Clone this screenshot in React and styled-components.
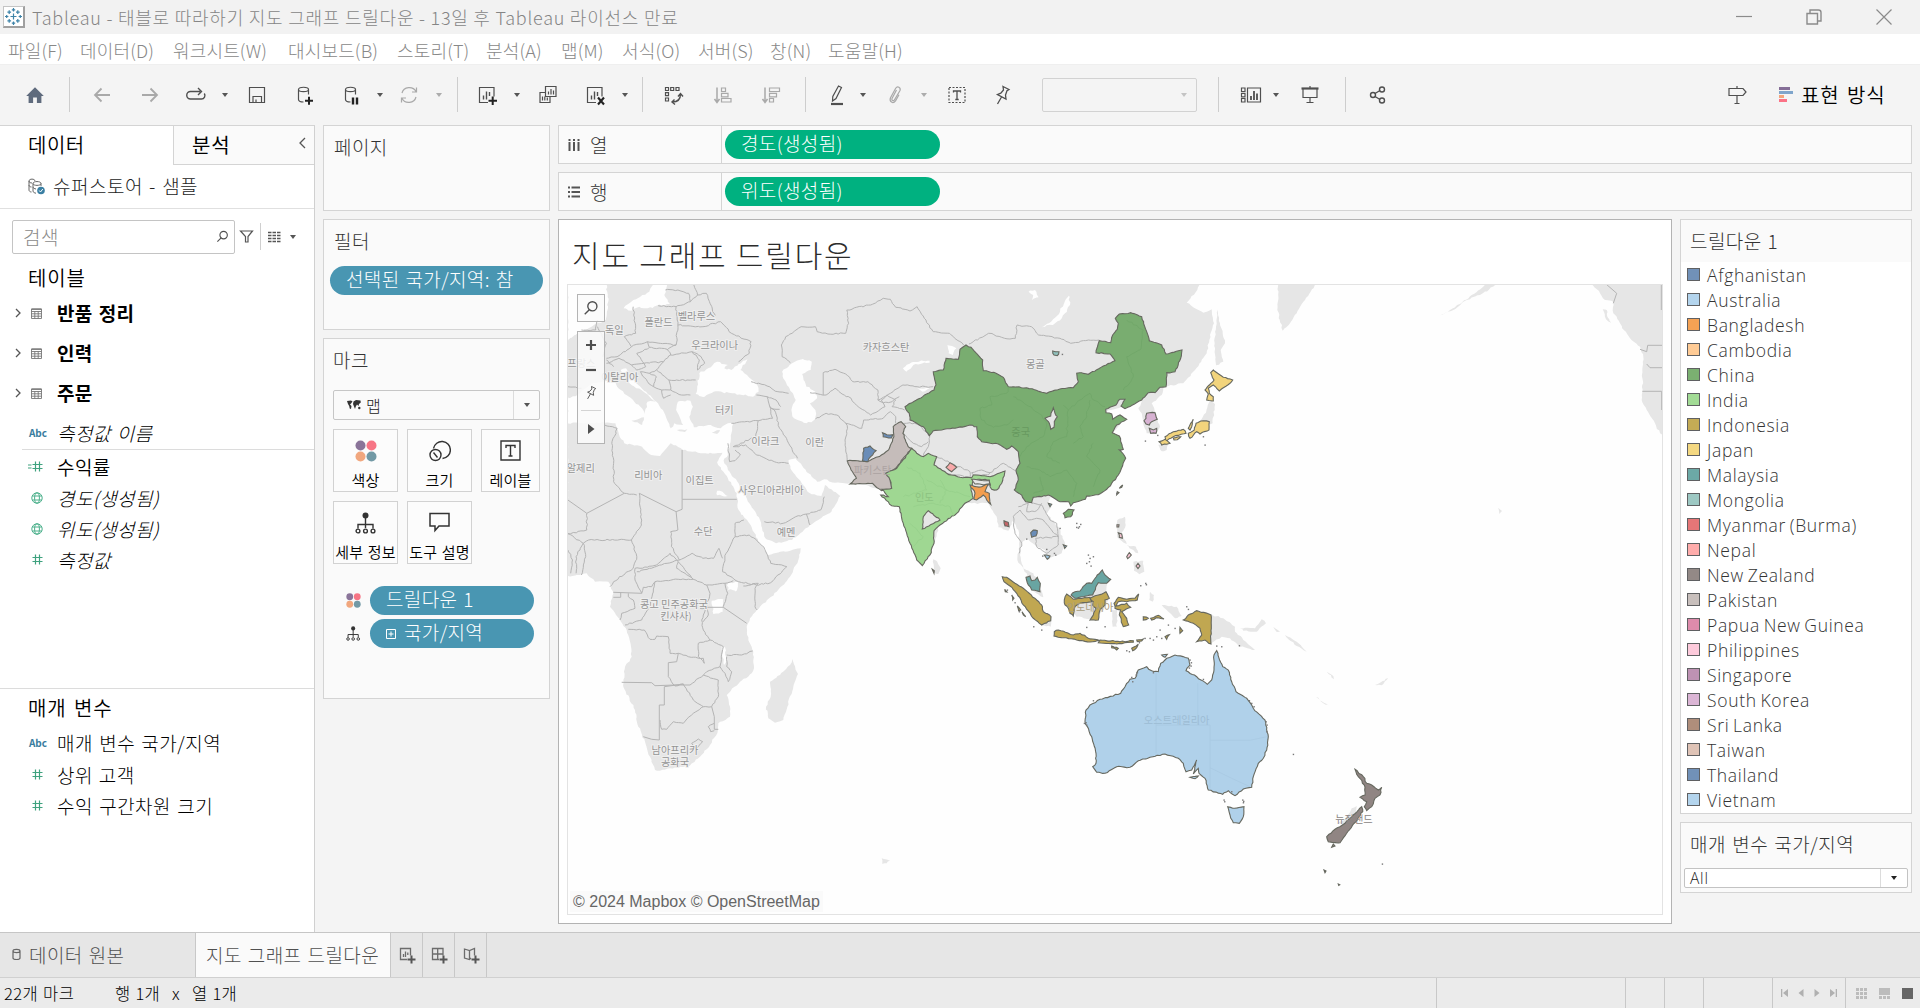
import React from "react";
import styled, { createGlobalStyle, css } from "styled-components";

const UI = `"Noto Sans CJK KR", "Noto Sans", sans-serif`;

const Global = createGlobalStyle`
  * { box-sizing: border-box; }
  html, body { margin: 0; padding: 0; }
  body { width: 1920px; height: 1008px; overflow: hidden; background: #f4f4f4; font-family: ${UI}; }
`;

/* ---------- text ---------- */

const Text = styled.span`
  display: block;
  white-space: pre;
  font-family: ${(p) => p.$family || UI};
  font-size: ${(p) => p.$size || 19}px;
  line-height: ${(p) => p.$lh || 28}px;
  font-weight: ${(p) => p.$weight || 300};
  font-style: ${(p) => (p.$italic ? "italic" : "normal")};
  letter-spacing: ${(p) => (p.$ls === undefined ? 0.4 : p.$ls)}px;
  word-spacing: ${(p) => (p.$ws === undefined ? 1.5 : p.$ws)}px;
  color: ${(p) => p.$color || "#000"};
`;

/* ---------- frame ---------- */

const Window = styled.div`
  width: 1920px;
  height: 1008px;
  display: flex;
  flex-direction: column;
  background: #f4f4f4;
`;

const TitleBar = styled.header`
  height: 34px;
  flex: none;
  display: flex;
  align-items: center;
  background: #f2f2f2;
  padding: 0 28px 0 3px;
`;
const AppIcon = styled.div`
  width: 22px;
  height: 22px;
  border: 1px solid #c4c4c4;
  border-right: 2px solid #a0a0a0;
  border-bottom: 2px solid #a0a0a0;
  background: #fff;
  display: flex;
  margin-right: 7px;
`;
const WindowButtons = styled.div`
  margin-left: auto;
  display: flex;
  gap: 54px;
  align-items: center;
`;

const MenuBar = styled.nav`
  height: 30px;
  flex: none;
  display: flex;
  align-items: center;
  background: #fff;
  padding: 2px 0 0 8px;
`;
const MenuItem = styled.div`
  width: ${(p) => p.$w}px;
`;

const Toolbar = styled.div`
  height: 61px;
  flex: none;
  display: flex;
  align-items: center;
  border-top: 1px solid #efefef;
  background: #f4f4f4;
  padding-bottom: 1px;
`;
const Tool = styled.div`
  width: ${(p) => p.$w || 24}px;
  height: 24px;
  margin-left: ${(p) => p.$ml || 0}px;
  display: flex;
  align-items: center;
  justify-content: center;
  opacity: ${(p) => (p.$off ? 0.45 : 1)};
`;
const Rule = styled.div`
  width: 1px;
  height: 35px;
  margin-left: ${(p) => p.$ml}px;
  background: #cdcdcd;
`;
const ToolSelect = styled.div`
  width: 155px;
  height: 34px;
  margin-left: ${(p) => p.$ml}px;
  border: 1px solid #d2d2d2;
  border-radius: 2px;
  display: flex;
  align-items: center;
  justify-content: flex-end;
  padding-right: 9px;
`;
const Caret = styled.i`
  display: block;
  border: solid transparent;
  border-width: ${(p) => p.$s || 3}px ${(p) => p.$s || 3}px 0;
  border-top: ${(p) => (p.$s || 3) + 1}px solid ${(p) => p.$c || "#555"};
`;
const ShowMe = styled.div`
  display: flex;
  align-items: center;
  margin-left: ${(p) => p.$ml}px;
  gap: 8px;
`;
const Bars = styled.div`
  width: 14px;
  display: flex;
  flex-direction: column;
  gap: 1px;
`;
const Bar = styled.i`
  display: block;
  height: 3px;
  width: ${(p) => p.$w}px;
  background: ${(p) => p.$c};
`;

const Body = styled.main`
  height: 807px;
  flex: none;
  display: flex;
`;

/* ---------- data pane ---------- */

const DataPane = styled.aside`
  width: 315px;
  flex: none;
  border-top: 1px solid #d4d4d4;
  border-right: 1px solid #d0d0d0;
  background: #fff;
  display: flex;
  flex-direction: column;
`;
const PaneTabs = styled.div`
  height: 39px;
  display: flex;
`;
const DataTab = styled.div`
  width: 173px;
  padding: 5px 0 0 28px;
`;
const AnalyticsTab = styled.div`
  flex: 1;
  border-left: 1px solid #d4d4d4;
  border-bottom: 1px solid #d4d4d4;
  background: #fafafa;
  padding: 5px 8px 0 18px;
  display: flex;
  justify-content: space-between;
`;
const SourceRow = styled.div`
  height: 44px;
  border-bottom: 1px solid #e0e0e0;
  display: flex;
  align-items: center;
  padding: 0 0 1px 28px;
  gap: 8px;
`;
const SearchRow = styled.div`
  height: 57px;
  display: flex;
  align-items: center;
  padding: 0 0 2px 12px;
`;
const SearchBox = styled.div`
  width: 223px;
  height: 34px;
  border: 1px solid #c4c4c4;
  border-radius: 2px;
  display: flex;
  align-items: center;
  justify-content: space-between;
  padding: 0 5px 0 10px;
  margin-right: 4px;
`;
const Vert = styled.i`
  width: 1px;
  height: 27px;
  background: #cfcfcf;
  margin: 0 7px 0 6px;
`;
const SectionTitle = styled.div`
  height: ${(p) => p.$h}px;
  padding-left: 28px;
  display: flex;
  align-items: center;
`;
const TableRow = styled.div`
  height: 40px;
  display: flex;
  align-items: center;
  padding-left: 15px;
`;
const TableGlyphs = styled.div`
  width: 42px;
  display: flex;
  align-items: center;
  gap: 9px;
`;
const FieldRow = styled.div`
  height: ${(p) => p.$h || 31}px;
  display: flex;
  align-items: center;
  padding: ${(p) => p.$pt || 0}px 0 0 22px;
`;
const FieldIcon = styled.div`
  width: 35px;
  flex: none;
  display: flex;
  padding-left: ${(p) => p.$pl || 0}px;
`;
const Divider = styled.div`
  height: 1px;
  background: #dcdcdc;
  margin-left: ${(p) => p.$ml || 0}px;
`;
const Filler = styled.div`
  height: ${(p) => p.$h}px;
`;

/* ---------- shelves ---------- */

const Cards = styled.section`
  width: 227px;
  flex: none;
  margin-left: 8px;
  display: flex;
  flex-direction: column;
  gap: 8px;
`;
const Card = styled.div`
  height: ${(p) => p.$h}px;
  border: 1px solid #d4d4d4;
  background: #fafafa;
  padding: ${(p) => p.$pad || "7px 6px 0"};
`;
const CardTitle = styled.div`
  padding-left: 4px;
`;
const Pill = styled.div`
  width: ${(p) => p.$w}px;
  height: 29px;
  border-radius: 15px;
  background: ${(p) => (p.$green ? "#00b180" : "#4996b2")};
  display: flex;
  align-items: center;
  gap: 8px;
  padding-left: 16px;
  flex: none;
`;
const PillText = styled(Text)`
  padding-bottom: 4px;
  letter-spacing: 0.35px;
`;
const MarkSelect = styled.div`
  height: 30px;
  margin-top: 16px;
  border: 1px solid #c6c6c6;
  border-radius: 2px;
  display: flex;
  align-items: center;
  padding-left: 13px;
  gap: 5px;
`;
const SelectButton = styled.div`
  width: ${(p) => p.$w || 26}px;
  align-self: stretch;
  margin-left: auto;
  border-left: 1px solid #dcdcdc;
  display: flex;
  align-items: center;
  justify-content: center;
`;
const MarkGrid = styled.div`
  display: grid;
  grid-template-columns: 65px 65px 59px;
  grid-auto-rows: 63px;
  gap: 9px;
  margin-top: 9px;
`;
const MarkButton = styled.div`
  border: 1px solid #d2d2d2;
  background: #fcfcfc;
  display: flex;
  flex-direction: column;
  align-items: center;
  padding-top: 10px;
  gap: 8px;
`;
const MarkName = styled(Text)`
  font-size: 15px;
  line-height: 20px;
  letter-spacing: 0.15px;
  word-spacing: 1px;
  font-weight: 350;
`;
const MarkPills = styled.div`
  margin-top: 22px;
  display: flex;
  flex-direction: column;
  gap: 4px;
`;
const MarkPillRow = styled.div`
  display: flex;
  align-items: center;
  padding-left: 13px;
  gap: 9px;
`;

const Workspace = styled.section`
  width: 1354px;
  margin-left: 8px;
  display: flex;
  flex-direction: column;
  gap: 8px;
`;
const Shelf = styled.div`
  height: 39px;
  flex: none;
  border: 1px solid #d4d4d4;
  background: #fafafa;
  display: flex;
`;
const ShelfName = styled.div`
  width: 163px;
  border-right: 1px solid #d4d4d4;
  display: flex;
  align-items: center;
  padding-left: 9px;
  gap: 10px;
`;
const ShelfBody = styled.div`
  padding: 4px 0 0 3px;
`;
const ViewRow = styled.div`
  display: flex;
  gap: 8px;
  align-items: flex-start;
`;
const Sheet = styled.div`
  width: 1114px;
  height: 705px;
  border: 1px solid #b3b3b3;
  background: #fff;
  padding: 0 8px;
`;
const SheetTitle = styled.div`
  height: 64px;
  padding: 12px 0 0 5px;
`;
const MapFrame = styled.div`
  position: relative;
  width: 1096px;
  height: 631px;
  border: 1px solid #e3e3e3;
  svg.map { display: block; }
`;
const floating = css`
  position: absolute;
  left: 9px;
  width: 28px;
  border: 1px solid #b4b4b4;
  background: rgba(250, 250, 250, 0.86);
  display: flex;
  flex-direction: column;
  align-items: center;
`;
const MapSearch = styled.div`
  ${floating}
  top: 9px;
  height: 28px;
  justify-content: center;
`;
const MapTools = styled.div`
  ${floating}
  top: 46px;
  height: 113px;
  padding-top: 6px;
  gap: 9px;
`;
const MapToolsRule = styled.i`
  width: 20px;
  height: 1px;
  background: #d4d4d4;
  margin-bottom: 2px;
`;
const Credits = styled.div`
  position: absolute;
  left: 2px;
  bottom: 2px;
  height: 21px;
  padding: 1px 3px 0;
  background: #fafafa;
`;

const RightCol = styled.aside`
  width: 232px;
  display: flex;
  flex-direction: column;
  gap: 8px;
`;
const Legend = styled.div`
  height: 595px;
  border: 1px solid #d4d4d4;
  background: #fff;
`;
const LegendHead = styled.div`
  height: 42px;
  background: #fafafa;
  padding: 7px 0 0 9px;
`;
const LegendRow = styled.div`
  height: 25px;
  display: flex;
  align-items: center;
  gap: 7px;
  padding-left: 6px;
`;
const LegendName = styled(Text)`
  font-family: "Open Sans", "Noto Sans", sans-serif;
  font-size: 17.5px;
  line-height: 25px;
  letter-spacing: 0.68px;
  word-spacing: -1.5px;
  color: #333;
  padding-top: 2px;
`;
const Swatch = styled.i`
  width: 13px;
  height: 13px;
  border: 1px solid #5f6062;
  background: ${(p) => p.$c};
`;
const Param = styled.div`
  height: 71px;
  border: 1px solid #d4d4d4;
  background: #fafafa;
  padding: 7px 3px 0;
`;
const ParamName = styled.div`
  padding-left: 6px;
`;
const ParamSelect = styled.div`
  height: 20px;
  margin-top: 10px;
  border: 1px solid #c3c3c3;
  border-radius: 2px;
  background: #fff;
  display: flex;
  align-items: center;
  padding-left: 5px;
`;

/* ---------- bottom ---------- */

const SheetTabs = styled.footer`
  height: 45px;
  flex: none;
  border-top: 1px solid #c6c6c6;
  background: #e6e6e6;
  display: flex;
`;
const SheetTab = styled.div`
  width: ${(p) => p.$w}px;
  border-right: 1px solid #c8c8c8;
  background: ${(p) => (p.$active ? "#fafafa" : "#e6e6e6")};
  display: flex;
  align-items: center;
  justify-content: ${(p) => (p.$center ? "center" : "flex-start")};
  padding-left: ${(p) => p.$pl || 0}px;
  padding-bottom: 1px;
  gap: 7px;
`;
const StatusBar = styled.div`
  height: 31px;
  flex: none;
  border-top: 1px solid #d0d0d0;
  background: #ebebeb;
  display: flex;
`;
const StatusText = styled.div`
  width: 1436px;
  display: flex;
  padding: 3px 0 0 4px;
`;
const StatusCell = styled.div`
  width: ${(p) => p.$w}px;
  border-left: 1px solid #c8c8c8;
  display: flex;
  align-items: center;
  gap: ${(p) => p.$gap || 0}px;
  padding-left: ${(p) => p.$pl || 0}px;
`;

/* ---------- icons ---------- */

const Svg = ({ w = 24, h = 24, c = "#4f4f4f", sw = 1.2, children, vb }) => (
  <svg width={w} height={h} viewBox={vb || `0 0 ${w} ${h}`} fill="none" stroke={c} strokeWidth={sw}>
    {children}
  </svg>
);

const TableauMark = () => (
  <Svg w={19} h={19} c="#3d83a8" sw={1.2}>
    <path d="M9.5 6.5v6M6.5 9.5h6M9.5 1v3.5M7.8 2.8h3.4M9.5 14.5V18M7.8 16.2h3.4M1 9.5h3.4M2.7 8v3M14.6 9.5H18M16.3 8v3M5.2 3.3v3.8M3.4 5.2h3.7M13.8 3.3v3.8M12 5.2h3.7M5.2 12v3.8M3.4 13.9h3.7M13.8 12v3.8M12 13.9h3.7" />
  </Svg>
);
const Home = () => (
  <Svg>
    <path d="M3.2 13 12 4.2l8.8 8.8h-2.4v7h-4.5v-5.6h-3.8V20H5.6v-7z" fill="#5f6b7d" stroke="none" />
  </Svg>
);
const Arrow = ({ flip }) => (
  <Svg c="#a9a9a9" sw={1.8}>
    <path d={flip ? "M4 12h15M12.5 5.5 19 12l-6.5 6.5" : "M20 12H5M11.5 5.5 5 12l6.5 6.5"} />
  </Svg>
);
const Redo = () => (
  <Svg sw={1.4}>
    <path d="M16.5 8.5H6.5a3.500 3.500 0 0 0 0 7.500h11a3.500 3.500 0 0 0 2.800-5.500M14 5l3.500 3.500L14 12" />
  </Svg>
);
const Save = () => (
  <Svg>
    <path d="M4.500 4.500h15v15h-15zM8 19.500v-6h8.500v6M11 19.500V16.500" />
  </Svg>
);
const DbBody = () => <path d="M6.500 6.500v10c0 1.400 2 2.500 5 2.500M6.500 6.500c0-3 10-3 10 0 0 2.800-10 2.800-10 0M16.500 6.500v5" />;
const Db = ({ pause }) => (
  <Svg>
    <DbBody />
    {pause ? <path d="M14 14.500v7M18 14.500v7" stroke="#222" strokeWidth="2.400" /> : <path d="M13 17.700h8M17 13.700v8" stroke="#222" strokeWidth="2" />}
  </Svg>
);
const Refresh = () => (
  <Svg c="#4f4f4f">
    <path d="M5 10a7.500 7 0 0 1 14-1.500M19 14a7.500 7 0 0 1-14 1.500M19.500 4.500v4.500h-4.500M4.500 19.500V15H9" />
  </Svg>
);
const NewSheet = ({ x }) => (
  <Svg>
    <path d="M13 19.500H4.500v-15h14.500v9" />
    <path d="M8.500 16.500v-4M11.500 16.500v-8M14.500 13v-4" strokeWidth="1.400" />
    {x ? <path d="m15 14.500 6 7M21 14.500l-6 7" stroke="#222" strokeWidth="2.100" /> : <path d="M13.500 17.700h8.500M17.700 13.500v8.500" stroke="#222" strokeWidth="2" />}
  </Svg>
);
const Duplicate = () => (
  <Svg>
    <path d="M9.500 3.500h10.500v10H9.500zM9.500 9.500H4v10h10v-6" />
    <path d="M12.500 11.500v-3M15 11.500v-5.500M17.500 11.500v-4M6.500 17.500v-4M8.800 17.500v-4M11.300 17.500v-3" />
  </Svg>
);
const Swap = () => (
  <Svg>
    <path d="M3.500 4.500h3v3h-3zM8.700 4.500h3v3h-3zM14 4.500h3v3h-3zM3.500 9.700h3v3h-3zM3.500 15h3v3h-3z" />
    <path d="M18.500 11c0 5-3 8-8 8M16 13.500l2.500-3 2.500 3M12.500 16.500 10 19l3 2.500" strokeWidth="1.400" />
  </Svg>
);
const Sort = ({ desc }) => (
  <Svg>
    <path d="M6 4.500v14.500M3.500 16 6 19.500 8.500 16" strokeWidth="1.500" />
    {desc ? <path d="M10.500 5h10v3.500h-10zM10.500 10.300h7v3.500h-7zM10.500 15.500h4v3.500h-4z" /> : <path d="M10.500 5h4v3.500h-4zM10.500 10.300h6.500v3.500h-6.500zM10.500 15.500h9.500v3.500h-9.500z" />}
  </Svg>
);
const Pen = () => (
  <Svg>
    <path d="M13.500 3 16.500 4.500 11 15.500l-3.500 2.500.3-4.500z" />
    <path d="M6 21h12" strokeWidth="2.200" />
  </Svg>
);
const Clip = () => (
  <Svg>
    <path d="m13.500 7-4.500 8.500c-.8 2 1.500 3 2.500 1.200L17 7.500c1-3-2.500-5-4.300-2.200l-5.200 9.500c-1.500 4 2.500 6.500 5 3l3.500-6" />
  </Svg>
);
const TextBox = () => (
  <Svg>
    <path d="M4 4.500h16v15H4z" strokeDasharray="2 1.500" />
    <path d="M8.500 9.500V8h7v1.500M12 8v8.500M10.300 16.500h3.400" strokeWidth="1.300" />
  </Svg>
);
const Pin = ({ s = 24 }) => (
  <Svg w={s} h={s} vb="0 0 24 24">
    <path d="m12 3.500 6 3-2 1.300-1.500 4.200.5 4-8.500-4.500 3.300-1.300 2.700-3.200zM10.500 14l-4 7" strokeWidth="1.300" />
  </Svg>
);
const Fit = () => (
  <Svg>
    <path d="M2.500 5H6v3.500H2.500zM2.500 10.300H6v3.500H2.500zM2.500 15.500H6V19H2.500zM8.500 5h13v14h-13z" />
    <path d="M12 17v-4M15 17V8M18 17v-6.500" strokeWidth="1.800" />
  </Svg>
);
const Present = () => (
  <Svg>
    <path d="M3.500 5.500h17" strokeWidth="2.200" />
    <path d="M5 6v8.500h14V6M12 14.500v5M8.500 19.500h7M12 3v2" />
  </Svg>
);
const Share = () => (
  <Svg sw={1.4}>
    <circle cx="7" cy="12" r="2.500" />
    <circle cx="16" cy="6.500" r="2.500" />
    <circle cx="16" cy="17.500" r="2.500" />
    <path d="m9 10.500 5-3M9 13.500l5 3" />
  </Svg>
);
const Signpost = () => (
  <Svg>
    <path d="M4 5.500h14l3 3.500-3 3.500H4zM12 3v2.500M12 12.500v8M9.500 20.500h5" />
  </Svg>
);
const Magnifier = ({ s = 14 }) => (
  <Svg w={s} h={s} vb="0 0 14 14">
    <circle cx="8.200" cy="5.500" r="4" />
    <path d="M5.500 8.500 1.500 12.500" />
  </Svg>
);
const Funnel = () => (
  <Svg w={15} h={15} c="#555">
    <path d="M1.500 2h12L9 7.500V13H6.500V7.500z" />
  </Svg>
);
const ListGrid = () => (
  <Svg w={13} h={12} c="#555" sw={1.3}>
    <path d="M0 1.500h3.500M4.500 1.500H8M9 1.500h3.500M0 4.500h3.500M4.500 4.500H8M9 4.500h3.500M0 7.500h3.500M4.500 7.500H8M9 7.500h3.500M0 10.500h3.500M4.500 10.500H8M9 10.500h3.500" />
  </Svg>
);
const TableIcon = () => (
  <Svg w={11} h={11} c="#777" sw={0.9}>
    <path d="M.5 1h10v9.500H.5zM.5 3.500h10M.5 5.800h10M.5 8.200h10M3.800 3.500v7M7.200 3.500v7" />
    <path d="M.5 1.200h10" strokeWidth="1.300" />
  </Svg>
);
const Chevron = ({ left }) => (
  <Svg w={7} h={12} c="#555" sw={1.3}>
    <path d={left ? "M6 1 1 6l5 5" : "M1 2l4 4-4 4"} />
  </Svg>
);
const Hash = ({ eq }) => (
  <Svg w={eq ? 15 : 11} h={11} c="#3fa27f" sw={1.2}>
    <g transform={eq ? "translate(4 0)" : ""}>
      <path d="M3.500.5v10M7.500.5v10M.5 3.500h10M.5 7.500h10" />
    </g>
    {eq && <path d="M0 4h3.500M0 7h3.500" />}
  </Svg>
);
const Globe = () => (
  <Svg w={12} h={12} c="#4bb08b" sw={1}>
    <circle cx="6" cy="6" r="5.200" />
    <ellipse cx="6" cy="6" rx="2.400" ry="5.200" />
    <path d="M1.300 4h9.400M1.300 8h9.400" />
  </Svg>
);
const Source = () => (
  <Svg w={17} h={17} c="#666" sw={1}>
    <path d="M1 3c0-2.500 6-2.500 6 0M1 3v9c0 1 1 2 2.500 2M1 3c0 1.500 1.500 2 3 2M1 7c0 1 1 2 2.500 2M5 5.500c0-2.600 8-2.600 8 0 0 2.500-8 2.500-8 0v7.500c0 1.300 1.500 2 3 2.200M5 9c0 1 1.500 1.800 3 2M13 5.500V8" />
    <circle cx="13" cy="12.500" r="3.800" fill="#3a7fa3" stroke="none" />
    <path d="m11.200 12.500 1.300 1.500 2.300-3" stroke="#fff" />
  </Svg>
);
const Dots = ({ s }) => (
  <svg width={s} height={s} viewBox="0 0 22 22">
    <circle cx="5.500" cy="5.500" r="5" fill="#8a7499" />
    <circle cx="16.500" cy="5.500" r="5" fill="#f77585" />
    <circle cx="5.500" cy="16.500" r="5" fill="#f1a77e" />
    <circle cx="16.500" cy="16.500" r="5" fill="#7299a5" />
  </svg>
);
const SizeIcon = () => (
  <Svg w={22} h={22} c="#333" sw={1.4}>
    <path d="M4.500 8.500A8.500 8.500 0 1 1 13.500 18.500" />
    <circle cx="6.500" cy="15" r="5.500" />
    <path d="m4.500 12.500 4 5" />
  </Svg>
);
const LabelIcon = () => (
  <Svg w={22} h={22} c="#333" sw={1.4}>
    <path d="M1 1h19v19H1zM6 8V5.500h9V8M10.500 5.500v10.500M8.500 16h4" />
  </Svg>
);
const DetailIcon = ({ s = 22 }) => (
  <Svg w={s} h={s} vb="0 0 22 22" c="#333" sw={1.4}>
    <circle cx="10.500" cy="3.500" r="3" fill="#333" stroke="none" />
    <path d="M10.500 4v12M3 16.500v-4h15v4" />
    <circle cx="3" cy="19" r="1.900" />
    <circle cx="10.500" cy="19" r="1.900" />
    <circle cx="18" cy="19" r="1.900" />
  </Svg>
);
const TooltipIcon = () => (
  <Svg w={22} h={22} c="#333" sw={1.5}>
    <path d="M1 1.500h19v12.500h-10l-4 4.500v-4.500H1z" />
  </Svg>
);
const WorldIcon = () => (
  <Svg w={14} h={10} c="none">
    <path fill="#333" d="M0 1l4-.5 1.500 1L4 3.500 3 4.500l1.500 1.500-.5 3-1.300-.500L2.200 6 1 4zM6.500 1.500 9 0l4.500.5.3 2-1.800 1.500L11.500 6 10 4.500 8.800 6.500 8 9 6.800 6 6 4z" />
    <circle cx="12.300" cy="8" r="1.200" fill="#333" />
  </Svg>
);
const PlusBox = () => (
  <Svg w={10} h={10} c="#fff" sw={1}>
    <path d="M.5.5h9v9h-9zM2.500 5h5M5 2.500v5" />
  </Svg>
);
const NewTab = ({ kind }) => (
  <Svg w={18} h={18} c="#6c6c6c" sw={1.3}>
    {kind === "sheet" && <path d="M9 13.500H2.500V2.500h10v7M5.500 11V8M7.500 11V5.500M9.800 9V6.500" />}
    {kind === "dash" && <path d="M9 13.500H2.500V2.500h10.500v7M2.500 8H13M7.700 2.500v11" />}
    {kind === "story" && <path d="M9 12 7.500 13.500l-5-1.500v-9l5 1.500 5-2v7M7.500 4.500v9" />}
    <path d="M9.500 13.500h8M13.500 9.500v8" stroke="#555" strokeWidth="2" />
  </Svg>
);

/* ---------- map geometry ---------- */

const grid = (ox, oy, sx, sy) => (s) =>
  s.trim().split(/\s+/).map((p) => {
    const [x, y] = p.split(",").map(Number);
    return [ox + x / sx, oy + y / sy];
  });
const west = grid(560, 210, 2.8, 3);
const asia = grid(860, 290, 3, 3);
const africa = grid(560, 540, 3, 3);
const oceania = grid(1050, 540, 3, 3);
const america = grid(1400, 210, 3, 3);

const noise = (n) => {
  const v = Math.sin(n * 12.9898) * 43758.5453;
  return v - Math.floor(v) - 0.5;
};

// Turns a list of points into a path, breaking long edges into a ragged natural line.
const trace = (pts, amp = 0.9, closed = true) => {
  const out = [];
  const n = closed ? pts.length : pts.length - 1;
  for (let i = 0; i < n; i++) {
    const a = pts[i];
    const b = pts[(i + 1) % pts.length];
    const d = Math.hypot(b[0] - a[0], b[1] - a[1]);
    const k = amp ? Math.max(1, Math.round(d / 2.6)) : 1;
    out.push(a);
    for (let j = 1; j < k; j++) {
      const t = j / k;
      const seed = a[0] + b[0] * 1.7 + (a[1] + b[1]) * 0.9 + j * 3.1;
      out.push([
        a[0] + (b[0] - a[0]) * t + noise(seed) * amp * 1.8,
        a[1] + (b[1] - a[1]) * t + noise(seed + 7.7) * amp * 1.8,
      ]);
    }
  }
  if (!closed) out.push(pts[pts.length - 1]);
  return "M" + out.map((p) => p[0].toFixed(1) + " " + p[1].toFixed(1)).join("L") + (closed ? "Z" : "");
};

const land = [
  [
    ...west("22,222"),
    ...asia("1020,-18 1012,0 980,38 1030,68 1055,58 1062,100 1048,150 1040,190 1005,240 970,280 925,288 910,295 905,315 875,340 890,375 900,410 890,430 860,430 850,400 845,370 835,355 850,325 830,335 785,350 740,365 758,388 790,390 757,428 790,510 740,598 640,636 570,622 562,640 575,650 560,672 595,710 615,760 605,790 560,810 555,780 530,770 500,745 485,762 480,795 490,835 520,850 540,880 550,922 515,900 500,850 472,810 478,770 475,720 460,690 445,722 415,712 410,680 390,650 385,640 320,640 240,700 210,800 185,820 150,750 120,650 95,642 70,600 0,582"),
    ...west("810,820 770,818 740,808 720,815 690,785 660,745 640,750 645,775 680,825 700,850 732,858 742,825 785,858 760,905 700,945 650,990 605,1000 575,985 560,930 530,880 500,820 470,780 458,752 470,735 480,670 485,640 470,640 450,655 415,645 375,652 362,620 372,590 365,572 330,575 325,600 345,645 320,640 310,655 288,600 270,575 225,530 195,500 185,475 170,480 195,520 240,550 268,575 245,575 238,612 225,590 160,530 150,510 90,520 45,560 30,600 22,610"),
  ],
  [
    ...west("22,640 125,638 155,640 165,672 180,700 230,710 250,732 280,738 310,700 345,720 400,730 455,728 440,757 470,805 495,850 500,900 530,940 560,1000 580,1032"),
    ...africa("625,45 722,25 715,60 690,110 650,155 600,200 570,235 560,260 565,300 580,335 582,385 575,400 540,425 500,465 510,500 510,530 475,550 472,580 450,615 420,650 385,680 330,685 300,692 285,690 270,650 255,605 235,560 225,510 190,440 190,420 195,380 215,350 213,320 200,270 180,240 150,200 160,160 145,125 105,125 80,100 22,108"),
  ],
  africa("697,357 714,402 700,440 670,540 645,548 625,535 618,500 632,470 630,425 660,405 690,375"),
  west("200,632 235,622 230,645"),
  west("327,660 357,658 350,666"),
  west("425,668 448,660 440,672"),
  asia("220,808 232,815 242,835 235,852 222,848"),
  asia("1072,52 1080,100 1095,160 1082,180 1090,215 1068,226 1064,160 1068,110"),
  asia("1255,-18 1252,60 1268,122 1290,100 1310,70 1335,30 1370,-18"),
  asia("1048,335 1065,342 1058,400 1012,425 1020,395 1038,368"),
  asia("895,464 925,462 920,480 905,484"),
  asia("772,690 795,680 797,705 785,735 800,762 772,742 770,715"),
  asia("820,815 850,812 853,845 838,853 822,842"),
  asia("800,765 828,770 835,790 815,778"),
  asia("698,880 742,880 738,905 745,930 728,962 710,990 650,980 620,940 640,920"),
  asia("527,925 550,962 575,980 572,1010 545,1005 560,990"),
  asia("870,905 882,915 878,935 868,930"),
  asia("905,945 950,950 965,978 945,985 925,965"),
  asia("1050,972 1090,985 1125,1010 1125,1025 1150,1050 1185,1080 1140,1070 1110,1045 1085,1040 1050,1062"),
  asia("1140,1015 1185,1015 1205,988 1218,1000 1190,1025 1150,1022"),
  asia("755,960 772,960 770,1010 758,1010"),
  oceania("670,260 690,275 680,276"),
  oceania("705,285 740,305 770,335 740,318"),
  oceania("798,470 838,498 820,490"),
  oceania("975,435 990,428 1015,415 995,436"),
  oceania("830,395 850,408 852,418"),
  oceania("905,805 920,798 918,830 885,855 862,850 885,838"),
  africa("965,955 990,962 980,970 967,972"),
  america("575,222 600,250 615,270 640,275 640,310 660,340 690,385 720,410 730,440 727,480 728,540 725,570 740,600 765,640 780,670 789,675 789,222"),
  america("608,298 620,300 622,320 634,338 618,328"),
  america("120,316 150,300 180,282 215,255 262,222 292,222 240,255 200,270 160,300"),
  america("295,893 306,903 298,912"),
];

const water = [
  west("380,552 390,490 415,475 440,455 470,465 460,475 480,480 500,462 525,448 505,480 550,520 556,545 540,560 490,550 430,545 405,560"),
  west("622,485 650,460 680,447 705,455 702,480 678,492 690,530 715,545 720,565 700,580 715,600 715,628 690,640 655,625 648,600 660,570 640,530 625,505"),
  west("178,295 205,270 250,245 262,222 300,222 292,255 308,282 270,287 245,295 222,290 200,302"),
  west("22,222 130,222 135,275 128,330 95,345 80,355 50,370 22,390 22,300"),
  west("22,565 48,555 40,600 30,640 22,640"),
  west("1425,257 1428,285 1405,325 1380,345 1348,352 1375,335 1400,305 1415,270"),
  west("960,475 985,457 1035,452 1035,458 990,464 970,485"),
  west("1085,405 1110,415 1100,435 1088,430"),
  west("1000,535 1035,535 1015,545"),
  west("470,1120 498,1115 495,1142 470,1140"),
  west("1312,245 1330,240 1340,262 1322,270 1325,255"),
  africa("455,182 490,178 488,215 460,222"),
  africa("485,320 495,322 500,360 492,375"),
  africa("512,128 530,150 525,155"),
  west("440,842 455,845 470,858 440,856"),
];

const borders = [
  ...[
    "645,458 622,440 620,405 632,380 650,370 675,350 715,350 720,365 750,372 800,370 808,340 803,300 830,292 870,285 905,265 925,268 940,292 980,303 1000,290 1020,325 1045,365 1090,370 1130,405",
    "737,488 770,478 800,492 820,515 862,515 890,540 890,570 925,550 960,525 1000,530 1045,530",
    "700,548 745,555 770,535 790,552 815,565 835,590 870,615 910,590 900,570 915,555 940,570 930,590 965,600",
    "890,570 905,578 930,575 950,560",
    "715,628 745,610 775,615 800,640 845,655 850,630 905,625 925,605 940,620 940,640",
    "800,640 805,655 798,690 800,720 803,755",
    "1145,402 1200,370 1245,385 1275,385 1280,345 1320,350 1340,375 1400,385 1430,400 1480,390 1510,390",
    "480,640 555,632 595,625 588,590 600,600 615,655 640,700 665,745",
    "555,632 548,680 485,710",
    "485,710 520,705 550,735 600,755 640,760",
    "470,700 475,755 490,752 505,735 490,720",
    "535,515 580,528 610,545 640,550",
    "550,555 580,560 605,570 618,590",
    "580,560 590,595 615,598",
    "572,935 625,940 660,920 690,912 730,900 740,860",
    "690,912 700,945",
    "125,645 160,655 145,700 150,760 150,815 180,850 215,855",
    "22,970 65,1000 80,990 200,990 228,945 222,850",
    "200,990 215,1040 205,1075 150,1115 140,1130",
    "75,910 75,960 22,972",
    "65,1000 45,1040 45,1090",
    "22,1020 35,1050 30,1090",
    "65,1000 72,1040 60,1095",
    "330,960 310,965 312,1010 335,1050",
    "335,1050 300,1060 250,1075 215,1085",
    "335,1050 370,1030 400,1045 430,1045 445,1015 455,1045",
    "515,930 490,940 490,980 465,1030 455,1085 500,1115 550,1125 590,1118 635,1070 590,1060 570,1010 530,975 490,980",
    "205,290 212,370 180,380 200,410 245,395 325,405",
    "325,290 330,345 325,405 300,420",
    "275,287 325,290 365,275 360,250 330,240 295,240",
    "365,275 385,255 410,250 420,280 435,318",
    "375,225 385,255",
    "330,345 400,350 450,335 480,370 535,395 530,430 500,455",
    "245,395 250,412 215,430 235,460 200,465 165,445 130,460",
    "200,410 160,440 130,445",
    "235,460 290,455 310,435 300,418 250,412",
    "310,435 370,425 395,440 405,460 385,480 390,450 370,425",
    "290,455 270,480 305,510 380,510",
    "225,485 250,490 270,480",
    "225,485 245,515 262,530 270,500 250,490",
    "305,510 310,540 285,540 262,530",
    "310,540 340,555 365,555",
    "285,540 290,565 310,555",
    "200,465 215,480 240,470 235,460",
    "105,350 130,400 120,440",
    "130,450 150,470",
    "105,330 100,360 60,360",
    "22,530 60,535",
  ].map((s) => trace(west(s), 0.8, false)),
  ...["737,488 737,555", "342,720 342,868 495,868", "22,870 75,910 180,850", "222,850 325,905 330,960", "325,905 342,898 342,868"].map((s) => trace(west(s), 0, false)),
  ...[
    "225,85 240,85 290,75 330,40 355,65 400,118 355,118 285,125 275,140 250,142 245,160 225,120 225,85",
    "400,118 440,135 450,160 440,200 425,240 430,270 450,300 415,310 415,350 433,370 430,355 385,350 355,340 330,340 325,290 290,288 285,298 270,298 253,270 205,268",
    "285,125 270,200 245,240 195,255",
    "205,160 205,170 220,180 225,205 185,220 180,240",
    "440,135 495,130 503,160 490,200",
    "495,130 520,122",
    "550,138 595,130 585,145 585,200 592,210",
    "420,205 440,205 445,225 430,245",
    "355,65 350,85 375,100 400,118",
    "500,345 545,345 578,333",
    "450,300 490,320 480,380 440,395",
    "500,350 500,380 515,395 505,425 495,400 480,380",
    "370,432 400,480 430,500 400,520 370,550 340,545 320,568 305,568 300,540",
    "390,435 430,405 440,395",
    "430,405 475,420 475,470 455,500 430,500",
    "395,610 415,597 428,605 410,625 395,610",
    "463,550 445,560 452,575 463,572",
    "370,432 345,438 325,410",
  ].map((s) => trace(africa(s), 0.6, false)),
  ...["160,157 245,160", "160,172 182,172 182,157", "440,202 490,202 560,250", "355,340 350,365 325,368 325,410", "185,427 275,428 285,437 345,435 390,435", "370,432 313,440 313,495 298,495 298,600 275,598 250,590", "455,500 463,530 463,568 475,568"].map((s) => trace(africa(s), 0, false)),
  ...[
    "460,680 480,660 505,690 530,685 550,690 570,715 595,740",
    "460,680 465,730 485,760 478,790",
    "475,650 505,640 500,665 530,662 545,640",
    "515,640 545,645 570,690 590,700 595,740",
    "527,745 595,740 595,765 560,790 530,770 527,745",
    "230,502 222,525 260,550 330,563 330,545 285,525 245,505 230,502",
    "335,548 365,540 390,548 385,555 340,555 335,548",
    "390,548 430,520 445,530 470,545",
    "115,400 150,398 180,405 210,440 205,470 190,497",
    "130,430 160,460 185,470 205,455",
    "130,430 125,405",
  ].map((s) => trace(asia(s), 0.8, false)),
  ...["618,222 650,250 640,280", "720,418 740,425 743,406 787,406"].map((s) => trace(america(s), 0, false)),
  ...["740,462 750,473 787,473", "727,544 785,544 785,600", "784,222 784,300"].map((s) => trace(america(s), 0, false)),
];

const provinces = [
  "445,290 440,310 390,320 395,345 360,355 365,390 400,412 440,405 460,390",
  "460,320 500,345 545,375 560,400 550,440 500,470 480,500",
  "610,345 625,360 620,440 580,455 560,500 600,520",
  "625,360 660,330 690,310 700,330 735,350",
  "690,330 680,380 660,410 670,440 640,460",
  "800,90 850,120 840,180 800,200 820,260 790,300",
  "500,530 540,540 570,560 620,540 650,580 640,620",
  "700,460 680,500 720,540 700,590",
  "540,560 550,600 520,610",
].map((s) => trace(asia(s), 1, false));
const indiaStates = [
  "140,530 180,550 200,600 130,620",
  "200,570 260,600 300,610 330,620",
  "160,650 220,640 270,650 280,680",
  "150,700 190,740 160,770",
  "240,570 260,600 240,640",
].map((s) => trace(asia(s), 1, false));
const ausStates = ["318,400 318,640", "443,430 443,555", "318,555 480,555", "480,555 480,745", "480,601 600,601 650,590", "480,683 545,715 600,740"].map((s) => trace(oceania(s), 0, false));

const C = {
  china: "#79ad70",
  india: "#9fd792",
  aus: "#b0d1ea",
  indo: "#c0a751",
  mal: "#69a5a2",
  pak: "#c5bcba",
  nz: "#908583",
  jp: "#f2d47c",
  bd: "#f39e4f",
  af: "#6a8db8",
  kr: "#d7b2d2",
  np: "#f9a9aa",
  mm: "#c46468",
  ph: "#f6c3d3",
};

const marks = [
  [C.china, asia("135,350 222,300 228,285 220,245 250,240 258,205 295,208 300,178 318,165 333,172 368,210 370,242 408,250 430,262 445,290 500,293 560,310 600,297 640,293 655,275 650,250 665,248 685,253 730,228 765,212 750,192 708,188 718,152 752,158 758,135 772,118 775,100 766,85 778,72 812,68 845,80 868,152 905,165 918,192 966,180 962,205 945,245 920,248 918,290 900,292 885,308 865,308 845,330 795,356 783,348 795,328 780,328 768,345 737,358 738,368 755,372 758,388 780,375 800,388 770,405 757,428 778,438 790,478 778,480 790,492 797,505 775,555 755,580 740,598 715,614 680,618 676,628 640,638 632,648 626,635 600,635 583,625 565,615 545,620 520,622 515,638 497,635 485,615 463,600 475,570 468,540 480,520 475,485 455,468 440,478 415,462 365,455 352,440 350,410 330,405 285,415 220,422 208,437 190,410 150,390 148,370")],
  ["#e6e6e6", asia("580,353 585,370 592,380 583,395 582,412 572,418 568,400 555,385 572,378")],
  [C.china, asia("625,658 642,660 632,680 615,683 610,670")],
  [C.pak, west("805,752 860,755 900,735 920,720 935,680 933,650 955,635 968,650 960,670 975,710 985,715 965,740 940,775 915,790 925,810 930,838 900,842 875,820 812,822 830,805 815,780")],
  [C.india, asia("155,475 170,490 190,500 205,490 230,500 222,525 260,550 300,562 335,563 340,555 390,560 435,543 425,580 410,600 395,598 390,590 388,570 360,568 340,570 333,600 340,625 315,640 290,670 240,705 222,722 222,760 210,795 187,827 170,810 150,760 130,700 118,650 95,647 62,615 85,620 65,598 95,595 90,570 77,550 110,535 145,490")],
  ["#e6e6e6", asia("205,662 240,690 187,717 190,680")],
  ["#e6e6e6", asia("335,568 388,572 390,585 345,582")],
  [C.bd, asia("330,585 350,590 365,590 385,582 375,605 388,610 392,643 380,630 370,615 350,630 342,628 345,610")],
  [C.np, asia("270,518 290,532 275,545 258,532")],
  [C.af, west("850,715 868,708 885,722 870,740 862,755 847,752")],
  [C.af, west("903,668 915,674 932,674 928,684 905,680")],
  [C.mm, asia("432,692 445,697 447,710 435,708")],
  [C.af, asia("512,728 520,720 532,722 528,738 515,742")],
  ["#7fa6c4", asia("565,640 575,643 570,650")],
  ["#7fa6c4", asia("610,764 620,768 614,775")],
  ["#9fc3dc", asia("553,795 570,798 562,808")],
  ["#8fc0bc", asia("578,183 597,185 592,197 582,195")],
  ["#b98d84", asia("217,838 223,842 222,850")],
  [C.kr, asia("860,370 885,368 892,388 875,395 868,405 858,402 852,392 858,385")],
  [C.kr, asia("868,415 880,420 890,415 888,430 872,430")],
  [C.jp, asia("1060,240 1090,262 1118,270 1110,280 1078,303 1060,285 1045,295 1048,310 1060,320 1060,333 1040,330 1045,312 1035,300 1048,285 1062,270 1052,248")],
  [C.jp, asia("1008,400 1030,392 1048,395 1047,420 1020,432 1010,425 990,445 985,430 1003,420")],
  [C.jp, asia("915,440 940,425 970,418 978,430 940,440 915,455")],
  [C.jp, asia("897,455 915,448 930,460 905,465")],
  [C.jp, asia("985,415 992,400 1000,388 995,410 990,420")],
  [C.jp, asia("940,444 962,440 952,449 942,450")],
  ["#dcc1b4", asia("778,595 788,585 785,592")],
  ["#dcc1b4", asia("772,605 777,608 770,614")],
  [C.ph, asia("775,728 785,732 787,745 778,742")],
  [C.ph, asia("800,800 808,788 814,795 803,806")],
  [C.ph, asia("828,828 834,820 840,828 834,836")],
  [C.ph, asia("771,704 777,704 776,711 771,711")],
  [C.mal, asia("498,862 510,858 515,872 525,870 532,862 541,880 540,905 515,900 505,885")],
  [C.mal, asia("633,915 645,905 660,903 680,880 695,880 712,855 727,840 735,855 752,868 740,880 715,878 698,915 665,920 645,925")],
  [C.indo, asia("613,930 620,912 632,920 640,928 690,922 695,935 660,940 645,950 640,978 630,970 625,955 615,945")],
  [C.indo, asia("700,935 690,925 715,915 738,905 748,925 735,930 735,945 720,960 715,990 690,990 700,975 708,955 698,945")],
  [C.indo, asia("427,860 440,862 465,880 490,895 530,930 545,945 550,965 573,980 572,992 545,1005 520,985 490,945 470,910 450,888 432,875")],
  [C.indo, asia("583,1025 595,1020 640,1035 660,1030 685,1045 720,1052 690,1056 650,1050 610,1043 582,1038")],
  [C.indo, asia("720,1050 780,1055 820,1052 820,1057 770,1062 715,1058")],
  [C.indo, asia("755,1068 775,1075 770,1080 755,1073")],
  [C.indo, asia("815,1075 835,1063 830,1073 818,1082")],
  [C.indo, asia("830,1050 850,1047 845,1053 832,1055")],
  [C.indo, asia("762,940 775,922 800,928 825,925 836,912 832,930 800,935 775,935 768,948 800,940 812,952 785,965 800,985 806,1005 790,1010 778,975 782,960 765,955")],
  [C.indo, asia("850,980 865,985 850,990")],
  [C.indo, asia("872,985 895,976 912,987 895,983 875,990")],
  [C.indo, asia("960,1012 968,1022 960,1030")],
  [C.indo, asia("970,990 985,975 1010,962 1053,975 1053,1062 1035,1050 1010,1055 1025,1035 1020,1015 1000,1000")],
  [C.indo, asia("915,1040 928,1034 920,1048")],
  [C.indo, asia("455,915 462,925 458,930")],
  [C.indo, asia("472,948 482,960 476,962")],
  [C.indo, asia("434,898 441,906 436,905")],
  [C.indo, asia("486,965 497,980 490,975")],
  [C.aus, oceania("120,495 150,478 212,460 225,440 240,418 255,415 265,390 290,380 305,392 325,395 332,370 350,355 375,345 415,355 420,375 408,392 440,410 472,433 485,420 492,390 492,345 500,332 518,380 535,390 545,425 558,455 590,475 610,505 645,540 655,590 650,630 640,655 625,670 610,710 605,742 580,747 555,767 535,752 518,763 475,750 465,715 447,700 445,685 430,702 440,660 425,690 408,695 400,670 385,655 345,642 300,652 265,662 240,682 200,680 165,700 140,697 128,680 138,670 138,640 125,590 105,545 108,510")],
  [C.aus, oceania("533,800 555,805 582,800 580,830 568,850 550,848 540,825")],
  [C.aus, oceania("420,712 445,708 435,716")],
  [C.aus, oceania("335,345 352,343 345,352")],
  [C.nz, oceania("915,688 940,710 950,730 965,735 985,750 995,742 990,765 975,775 965,800 950,812 943,800 950,785 930,772 945,765 943,735 925,710")],
  [C.nz, oceania("935,800 938,815 918,845 890,880 870,908 835,905 830,890 855,868 885,850 910,825")],
  [C.nz, oceania("850,912 855,918 845,922")],
  [C.nz, oceania("822,990 828,993 825,998")],
  [C.nz, oceania("865,1032 869,1034 866,1036")],
];

const specks = [
  ...asia("607,193 650,700 658,710 662,703 655,714 600,715 560,778 583,790 587,795 548,798 500,747 685,795 690,805 680,820 700,800 693,828 688,815 857,880 842,887 859,884 770,610 856,453 893,436 1035,465 1030,440 521,1010 545,1020 680,1012 735,1010 945,1015 925,1005 855,1045 870,1045 880,1050 890,1040 905,1045 900,1020 980,950 985,958 800,1082 808,1085 838,1058 650,712 442,900 465,938 478,965"),
  ...oceania("522,780 524,785 580,788 578,780 581,784 730,643 997,972 103,550 110,555 108,548 248,425 245,412 258,405 262,398 605,490 612,500 598,482 648,545 650,575 651,555 500,318 515,320 568,317 420,360 424,368 423,378 418,384 460,418 310,398 130,482 545,755"),
];

const labels = [
  ...[
    ["폴란드", "276,337"], ["벨라루스", "382,318"], ["독일", "152,361"], ["우크라이나", "433,405"], ["카자흐스탄", "913,413"],
    ["몽골", "1331,462"], ["프랑스", "60,461"], ["이탈리아", "167,503"], ["터키", "460,601"], ["이라크", "575,694"], ["이란", "713,696"],
    ["알제리", "58,774"], ["리비아", "247,795"], ["이집트", "391,810"], ["사우디아라비아", "590,841"], ["수단", "401,964"], ["예멘", "633,966"],
  ].map(([t, p]) => [t, west(p)[0]]),
  ["콩고 민주공화국", africa("342,194")[0]],
  ["킨샤사)", africa("348,229")[0]],
  ["남아프리카", africa("345,632")[0]],
  ["공화국", africa("345,667")[0]],
  ["파키스탄", west("875,780")[0], "#aca3a2"],
  ["인도", west("1020,863")[0], "#8cc281"],
  ["중국", west("1290,668")[0], "#67995f"],
  ["인도네시아", asia("690,953")[0], "#a89d80"],
  ["오스트레일리아", oceania("380,541")[0], "#9dbcd4"],
  ["뉴질랜드", oceania("912,838")[0], "#8b8685"],
];

const MapLabel = styled.text`
  font-family: ${UI};
  font-size: 10.2px;
  font-weight: 400;
  text-anchor: middle;
  fill: ${(p) => p.$c || "#949494"};
  paint-order: stroke;
  stroke: ${(p) => (p.$c ? "none" : "#efefef")};
  stroke-width: 2px;
`;

const WorldMap = () => (
  <svg className="map" width="1094" height="629" viewBox="568 285 1094 629">
    <rect x="567" y="284" width="1096" height="631" fill="#fefefe" />
    {land.map((p, i) => (
      <path key={i} d={trace(p, 0.8)} fill="#e6e6e6" />
    ))}
    {water.map((p, i) => (
      <path key={i} d={trace(p, 1)} fill="#fefefe" />
    ))}
    <g fill="none" stroke="#b4b4b4" strokeWidth="1" strokeLinejoin="round">
      {borders.map((d, i) => (
        <path key={i} d={d} />
      ))}
    </g>
    {marks.map(([c, p], i) => (
      <path key={i} d={trace(p, 0.6)} fill={c} stroke="#66685f" strokeWidth="1.1" />
    ))}
    <g fill="none" strokeWidth="0.8">
      {provinces.map((d, i) => <path key={i} d={d} stroke="#70a668" />)}
      {indiaStates.map((d, i) => <path key={i} d={d} stroke="#96cf8a" />)}
      {ausStates.map((d, i) => <path key={i} d={d} stroke="#a8c9e2" />)}
    </g>
    {specks.map(([x, y], i) => (
      <rect key={i} x={x - 0.6} y={y - 0.6} width="1.4" height="1.4" fill="#777" />
    ))}
    {labels.map(([t, [x, y], c]) => (
      <MapLabel key={t} x={x} y={y + 3.8} $c={c}>{t}</MapLabel>
    ))}
  </svg>
);

/* ---------- data ---------- */

const menu = [["파일(F)", 72], ["데이터(D)", 93], ["워크시트(W)", 115], ["대시보드(B)", 109], ["스토리(T)", 89], ["분석(A)", 75], ["맵(M)", 61], ["서식(O)", 76], ["서버(S)", 72], ["창(N)", 58], ["도움말(H)", 90]];

const legend = [
  ["Afghanistan", "#7191b8"], ["Australia", "#b3d4ed"], ["Bangladesh", "#f5a254"], ["Cambodia", "#ffcb95"], ["China", "#7bb071"],
  ["India", "#a2db95"], ["Indonesia", "#c4ab55"], ["Japan", "#f4d881"], ["Malaysia", "#6ca9a6"], ["Mongolia", "#9dc8c3"],
  ["Myanmar (Burma)", "#e67677"], ["Nepal", "#ffacab"], ["New Zealand", "#938986"], ["Pakistan", "#c8bfbc"], ["Papua New Guinea", "#dd8bab"],
  ["Philippines", "#fdcadb"], ["Singapore", "#be92b3"], ["South Korea", "#dbb5d5"], ["Sri Lanka", "#af8e7b"], ["Taiwan", "#dfc3b6"],
  ["Thailand", "#7191b8"], ["Vietnam", "#b3d4ed"],
];

const markButtons = [["색상", <Dots s={22} />], ["크기", <SizeIcon />], ["레이블", <LabelIcon />], ["세부 정보", <DetailIcon />], ["도구 설명", <TooltipIcon />]];

const Nav = ({ d }) => (
  <Svg w={8} h={10} c="none">
    <path d={d} fill="#b0b0b0" />
  </Svg>
);

export default function App() {
  return (
    <Window>
      <Global />
      <TitleBar>
        <AppIcon><TableauMark /></AppIcon>
        <Text $size={18} $ls={0.77} $ws={0} $color="#858585">Tableau - 태블로 따라하기 지도 그래프 드릴다운 - 13일 후 Tableau 라이선스 만료</Text>
        <WindowButtons>
          <Svg w={16} h={16} c="#8b8b8b"><path d="M0 7.5h16" /></Svg>
          <Svg w={16} h={16} c="#8b8b8b" sw={1.4}><path d="M1 4.500h10.500V15H1zM4 4V1h8.500q2.500 0 2.500 2.500V12h-3" /></Svg>
          <Svg w={16} h={16} c="#8b8b8b"><path d="m.5.5 15 15M15.500.5l-15 15" /></Svg>
        </WindowButtons>
      </TitleBar>
      <MenuBar>
        {menu.map(([t, w]) => (
          <MenuItem key={t} $w={w}><Text $size={18} $ls={0.15} $color="#888">{t}</Text></MenuItem>
        ))}
      </MenuBar>
      <Toolbar>
        <Tool $ml={23}><Home /></Tool>
        <Rule $ml={22} />
        <Tool $ml={20}><Arrow /></Tool>
        <Tool $ml={24}><Arrow flip /></Tool>
        <Tool $ml={22}><Redo /></Tool>
        <Tool $w={8} $ml={13}><Caret /></Tool>
        <Tool $ml={16}><Save /></Tool>
        <Tool $ml={23}><Db /></Tool>
        <Tool $ml={23}><Db pause /></Tool>
        <Tool $w={8} $ml={13}><Caret /></Tool>
        <Tool $ml={13} $off><Refresh /></Tool>
        <Tool $w={8} $ml={14} $off><Caret /></Tool>
        <Rule $ml={14} />
        <Tool $ml={17}><NewSheet /></Tool>
        <Tool $w={8} $ml={14}><Caret /></Tool>
        <Tool $ml={15}><Duplicate /></Tool>
        <Tool $ml={23}><NewSheet x /></Tool>
        <Tool $w={8} $ml={14}><Caret /></Tool>
        <Rule $ml={13} />
        <Tool $ml={19}><Swap /></Tool>
        <Tool $ml={25} $off><Sort /></Tool>
        <Tool $ml={24} $off><Sort desc /></Tool>
        <Rule $ml={22} />
        <Tool $ml={19}><Pen /></Tool>
        <Tool $w={8} $ml={10}><Caret /></Tool>
        <Tool $ml={16} $off><Clip /></Tool>
        <Tool $w={8} $ml={13} $off><Caret /></Tool>
        <Tool $ml={17}><TextBox /></Tool>
        <Tool $ml={22}><Pin /></Tool>
        <ToolSelect $ml={27}><Caret $s={3.5} $c="#c4c4c4" /></ToolSelect>
        <Rule $ml={21} />
        <Tool $ml={20}><Fit /></Tool>
        <Tool $w={8} $ml={9}><Caret /></Tool>
        <Tool $ml={18}><Present /></Tool>
        <Rule $ml={23} />
        <Tool $ml={20}><Share /></Tool>
        <Tool $ml={335}><Signpost /></Tool>
        <ShowMe $ml={30}>
          <Bars><Bar $w={11} $c="#856e97" /><Bar $w={14} $c="#7fa5cb" /><Bar $w={5} $c="#f3a57c" /><Bar $w={8} $c="#fb7286" /></Bars>
          <Text $size={20} $ls={0.9} $ws={2} $weight={350}>표현 방식</Text>
        </ShowMe>
      </Toolbar>

      <Body>
        <DataPane>
          <PaneTabs>
            <DataTab><Text $size={20} $ls={0.5} $weight={350}>데이터</Text></DataTab>
            <AnalyticsTab>
              <Text $size={20} $ls={0.9} $weight={400}>분석</Text>
              <Tool $w={7}><Chevron left /></Tool>
            </AnalyticsTab>
          </PaneTabs>
          <SourceRow><Source /><Text $color="#222" $ls={0.5}>슈퍼스토어 - 샘플</Text></SourceRow>
          <SearchRow>
            <SearchBox><Text $color="#8a8a8a">검색</Text><Magnifier s={13} /></SearchBox>
            <Funnel />
            <Vert />
            <ListGrid />
            <Tool $w={8} $ml={8}><Caret $s={3.5} /></Tool>
          </SearchRow>
          <SectionTitle $h={24}><Text $size={20} $ls={0.8} $weight={350} $lh={24}>테이블</Text></SectionTitle>
          <Filler $h={3} />
          {["반품 정리", "인력", "주문"].map((t) => (
            <TableRow key={t}>
              <TableGlyphs><Chevron /><TableIcon /></TableGlyphs>
              <Text $weight={700} $ls={0.3}>{t}</Text>
            </TableRow>
          ))}
          <FieldRow $h={36} $pt={3}>
            <FieldIcon $pl={7}><Text $size={10} $weight={700} $ls={-0.1} $color="#3a7d9e" $lh={14}>Abc</Text></FieldIcon>
            <Text $italic>측정값 이름</Text>
          </FieldRow>
          <Divider $ml={22} />
          <Filler $h={1} />
          <FieldRow><FieldIcon $pl={6}><Hash eq /></FieldIcon><Text $weight={350}>수익률</Text></FieldRow>
          <FieldRow><FieldIcon $pl={9}><Globe /></FieldIcon><Text $italic>경도(생성됨)</Text></FieldRow>
          <FieldRow><FieldIcon $pl={9}><Globe /></FieldIcon><Text $italic>위도(생성됨)</Text></FieldRow>
          <FieldRow><FieldIcon $pl={10}><Hash /></FieldIcon><Text $italic>측정값</Text></FieldRow>
          <Filler $h={113} />
          <Divider />
          <SectionTitle $h={38}><Text $size={20} $ls={0.9} $ws={2} $weight={350}>매개 변수</Text></SectionTitle>
          <FieldRow $h={32}>
            <FieldIcon $pl={7}><Text $size={10} $weight={700} $ls={-0.1} $color="#3a7d9e" $lh={14}>Abc</Text></FieldIcon>
            <Text $ls={0.5}>매개 변수 국가/지역</Text>
          </FieldRow>
          <FieldRow><FieldIcon $pl={10}><Hash /></FieldIcon><Text>상위 고객</Text></FieldRow>
          <FieldRow><FieldIcon $pl={10}><Hash /></FieldIcon><Text $ls={0.5}>수익 구간차원 크기</Text></FieldRow>
        </DataPane>

        <Cards>
          <Card $h={86}><CardTitle><Text $color="#333">페이지</Text></CardTitle></Card>
          <Card $h={111}>
            <CardTitle><Text $color="#333">필터</Text></CardTitle>
            <Filler $h={11} />
            <Pill $w={213}><PillText $color="#fff">선택된 국가/지역: 참</PillText></Pill>
          </Card>
          <Card $h={361} $pad="7px 9px 0">
            <Text $color="#333">마크</Text>
            <MarkSelect>
              <WorldIcon />
              <Text $size={16} $color="#222">맵</Text>
              <SelectButton><Caret $s={3.5} /></SelectButton>
            </MarkSelect>
            <MarkGrid>
              {markButtons.map(([t, icon]) => (
                <MarkButton key={t}>{icon}<MarkName>{t}</MarkName></MarkButton>
              ))}
            </MarkGrid>
            <MarkPills>
              <MarkPillRow><Dots s={15} /><Pill $w={164}><PillText $color="#fff">드릴다운 1</PillText></Pill></MarkPillRow>
              <MarkPillRow><DetailIcon s={15} /><Pill $w={164}><PlusBox /><PillText $color="#fff">국가/지역</PillText></Pill></MarkPillRow>
            </MarkPills>
          </Card>
        </Cards>

        <Workspace>
          <Shelf>
            <ShelfName>
              <Svg w={12} h={12} c="#555" sw={2}><path d="M1.500 0v2M1.500 3v9M6 0v2M6 3v9M10.500 0v2M10.500 3v9" /></Svg>
              <Text $color="#333">열</Text>
            </ShelfName>
            <ShelfBody><Pill $w={215} $green><PillText $color="#fff">경도(생성됨)</PillText></Pill></ShelfBody>
          </Shelf>
          <Shelf>
            <ShelfName>
              <Svg w={12} h={12} c="#555" sw={2}><path d="M0 1.500h2M3.500 1.500H12M0 6h2M3.500 6H12M0 10.500h2M3.500 10.500H12" /></Svg>
              <Text $color="#333">행</Text>
            </ShelfName>
            <ShelfBody><Pill $w={215} $green><PillText $color="#fff">위도(생성됨)</PillText></Pill></ShelfBody>
          </Shelf>
          <ViewRow>
            <Sheet>
              <SheetTitle><Text $size={30} $lh={44} $ls={1.8} $ws={0} $color="#2c2c2c">지도 그래프 드릴다운</Text></SheetTitle>
              <MapFrame>
                <WorldMap />
                <MapSearch><Magnifier s={16} /></MapSearch>
                <MapTools>
                  <Svg w={14} h={14} sw={2.2}><path d="M2 7h10M7 2v10" /></Svg>
                  <Svg w={14} h={14} sw={2.2}><path d="M2 9h10" /></Svg>
                  <Pin s={17} />
                  <MapToolsRule />
                  <Svg w={14} h={14}><path d="M4 2l6.500 5L4 12z" fill="#4f4f4f" stroke="none" /></Svg>
                </MapTools>
                <Credits>
                  <Text $family={`"Liberation Sans", Arial, sans-serif`} $size={16} $lh={20} $ls={0} $ws={0} $weight={400} $color="#666">© 2024 Mapbox © OpenStreetMap</Text>
                </Credits>
              </MapFrame>
            </Sheet>
            <RightCol>
              <Legend>
                <LegendHead><Text $color="#333">드릴다운 1</Text></LegendHead>
                {legend.map(([t, c]) => (
                  <LegendRow key={t}>
                    <Swatch $c={c} />
                    <LegendName>{t}</LegendName>
                  </LegendRow>
                ))}
              </Legend>
              <Param>
                <ParamName><Text $color="#333" $ls={0.5}>매개 변수 국가/지역</Text></ParamName>
                <ParamSelect>
                  <Text $family={`"Open Sans", "Noto Sans", sans-serif`} $size={15.5} $lh={20} $ls={0.8} $color="#222">All</Text>
                  <SelectButton $w={27}><Caret $s={3.5} $c="#222" /></SelectButton>
                </ParamSelect>
              </Param>
            </RightCol>
          </ViewRow>
        </Workspace>
      </Body>

      <SheetTabs>
        <SheetTab $w={196} $pl={12}>
          <Svg w={10} h={13} c="#666"><path d="M1 3v7c0 2 7 2 7 0V3c0-2.200-7-2.200-7 0s7 2.200 7 0" /></Svg>
          <Text $color="#505050">데이터 원본</Text>
        </SheetTab>
        <SheetTab $w={195} $active $pl={10}><Text $color="#505050">지도 그래프 드릴다운</Text></SheetTab>
        <SheetTab $w={32} $center><NewTab kind="sheet" /></SheetTab>
        <SheetTab $w={32} $center><NewTab kind="dash" /></SheetTab>
        <SheetTab $w={32} $center><NewTab kind="story" /></SheetTab>
      </SheetTabs>
      <StatusBar>
        <StatusText>
          <MenuItem $w={111}><Text $size={16.5} $lh={24} $ls={0.4} $ws={1}>22개 마크</Text></MenuItem>
          <MenuItem $w={57}><Text $size={16.5} $lh={24} $ls={0.3} $ws={1}>행 1개</Text></MenuItem>
          <MenuItem $w={20}><Text $size={16.5} $lh={24} $ls={0} $ws={0}>x</Text></MenuItem>
          <Text $size={16.5} $lh={24} $ls={0.3} $ws={1}>열 1개</Text>
        </StatusText>
        <StatusCell $w={189} />
        <StatusCell $w={39} />
        <StatusCell $w={39} />
        <StatusCell $w={69} />
        <StatusCell $w={73} $pl={8} $gap={8}>
          <Nav d="M0 1h1.300v8H0zM7 1v8L2 5z" />
          <Nav d="M6.500 1v8L1.500 5z" />
          <Nav d="M1.500 1v8l5-4z" />
          <Nav d="M1 1v8l5-4zM6.700 1H8v8H6.700z" />
        </StatusCell>
        <StatusCell $w={75} $pl={10} $gap={12}>
          <Svg w={11} h={11} c="none"><path fill="#bcbcbc" d="M0 0h3v3H0zM4 0h3v3H4zM8 0h3v3H8zM0 4h3v3H0zM4 4h3v3H4zM8 4h3v3H8zM0 8h3v3H0zM4 8h3v3H4zM8 8h3v3H8z" /></Svg>
          <Svg w={11} h={11} c="none"><path fill="#bcbcbc" d="M0 0h11v7H0zM0 8h3v3H0zM4 8h3v3H4zM8 8h3v3H8z" /></Svg>
          <Svg w={11} h={11} c="none"><path fill="#666" d="M0 0h11v11H0z" /></Svg>
        </StatusCell>
      </StatusBar>
    </Window>
  );
}
